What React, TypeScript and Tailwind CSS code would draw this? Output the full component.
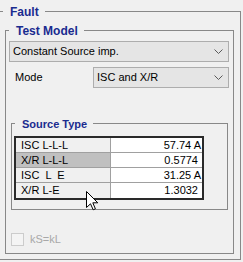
const rows = [
  { name: "ISC L-L-L", value: "57.74 A", selected: false, pad: "pr-[1px]" },
  { name: "X/R L-L-L", value: "0.5774", selected: true, pad: "pr-[4px]" },
  { name: "ISC  L  E", value: "31.25 A", selected: false, pad: "pr-[1px]" },
  { name: "X/R L-E", value: "1.3032", selected: false, pad: "pr-[4px]" },
]

function Chevron() {
  return (
    <svg width="9" height="5" viewBox="0 0 9 5" className="shrink-0">
      <polyline points="0.5,0.5 4.5,4.5 8.5,0.5" fill="none" stroke="#5a5a5a" strokeWidth="1" />
    </svg>
  )
}

function Combo({ text, className }: { text: string; className: string }) {
  return (
    <div
      className={`flex h-[21px] items-center justify-between border border-[#adadad] bg-[#e5e5e5] pl-[3px] pr-[5px] ${className}`}
    >
      <span className="whitespace-pre text-[11px] leading-none text-black">{text}</span>
      <Chevron />
    </div>
  )
}

function Legend({ text, className }: { text: string; className: string }) {
  return (
    <div
      className={`-mt-[8px] ml-[3px] h-[16px] w-fit bg-[#f0f0f0] pl-[7px] pr-[6px] font-bold leading-[16px] text-[#1a2b8f] ${className}`}
    >
      {text}
    </div>
  )
}

export default function App() {
  return (
    <div className="relative h-[262px] w-[243px] overflow-hidden bg-[#f0f0f0] font-['Liberation_Sans',Arial,sans-serif]">
      {/* Fault group */}
      <div className="ml-[-1px] mt-[11px] h-[249px] w-[242px] border border-[#888888]">
        <Legend text="Fault" className="text-[12px]" />

        {/* Test Model group */}
        <div className="ml-[5px] mr-[6px] mt-[10px] h-[224px] border border-[#888888]">
          <Legend text="Test Model" className="text-[12px]" />

          <Combo text="Constant Source imp." className="ml-[3px] mr-[4px] mt-[2px]" />

          <div className="mt-[5px] flex items-center">
            <span className="w-[87px] pl-[9px] text-[11px] leading-none">Mode</span>
            <Combo text="ISC and X/R" className="mr-[4px] flex-1" />
          </div>

          {/* Source Type group */}
          <div className="ml-[5px] mr-[5px] mt-[35px] h-[87px] border border-[#888888]">
            <Legend text="Source Type" className="text-[11px]" />

            <div className="ml-[2px] mt-[4px] w-[190px] border-2 border-[#2a2a2a] text-[11px] leading-none text-black">
              {rows.map((r, i) => (
                <div
                  key={r.name}
                  className={`flex h-[15px] ${i < rows.length - 1 ? "border-b border-[#a0a0a0]" : ""}`}
                >
                  <div
                    className={`flex w-[95px] items-center whitespace-pre border-r border-[#a0a0a0] pl-[5px] ${
                      r.selected ? "bg-[#c0c0c0]" : "bg-[#f0f0f0]"
                    }`}
                  >
                    {r.name}
                  </div>
                  <div className={`flex flex-1 items-center justify-end bg-white ${r.pad}`}>{r.value}</div>
                </div>
              ))}
            </div>
          </div>

          {/* kS=kL checkbox (disabled) */}
          <div className="ml-[5px] mt-[23px] flex items-center gap-[6px]">
            <div className="h-[13px] w-[13px] border border-[#cccccc] bg-[#f4f4f4]" />
            <span className="text-[11px] leading-none text-[#a8a8a8]">kS=kL</span>
          </div>
        </div>
      </div>

      {/* mouse cursor */}
      <svg width="13" height="20" viewBox="0 0 13 20" className="absolute left-[86px] top-[191px]">
        <path
          d="M0.5,0.5 L0.5,16.5 L4.5,12.8 L7.2,18.8 L9.4,17.8 L6.8,11.8 L11.8,11.8 Z"
          fill="white"
          stroke="black"
          strokeWidth="1"
          strokeLinejoin="miter"
        />
      </svg>
    </div>
  )
}
